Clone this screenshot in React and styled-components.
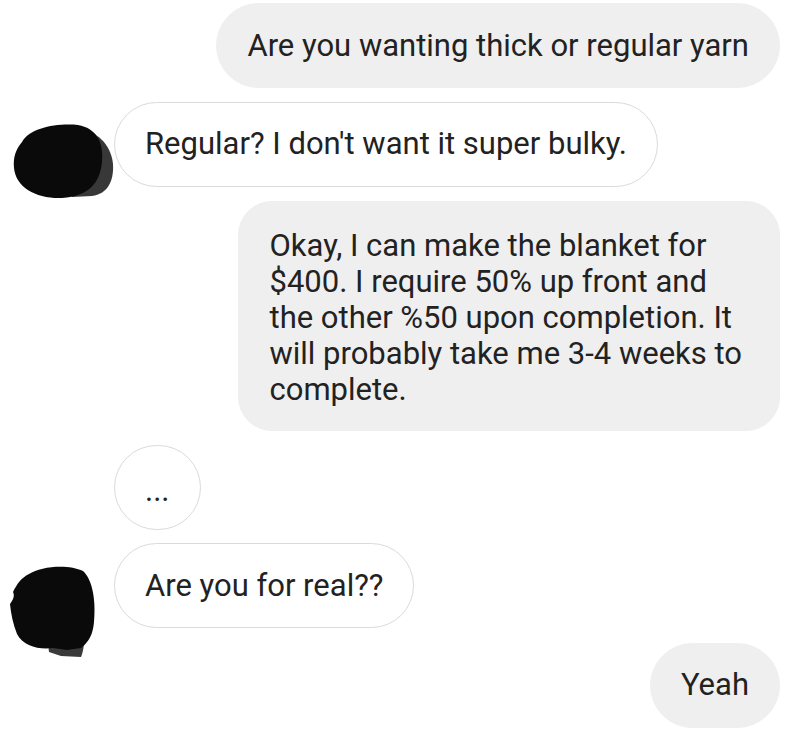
import styled, { createGlobalStyle } from 'styled-components';

const GlobalStyle = createGlobalStyle`
  html, body {
    margin: 0;
    padding: 0;
    background: #ffffff;
    overflow: hidden;
  }
  body {
    font-family: Roboto, 'Liberation Sans', Arial, sans-serif;
    color: #222222;
  }
`;

const Thread = styled.div`
  display: flex;
  flex-direction: column;
  gap: 13.5px;
  padding: 3px 20px 0 0;
  height: 727px;
  overflow: hidden;
`;

const Row = styled.div`
  display: flex;
  align-items: flex-start;
  justify-content: ${(p) => (p.$mine ? 'flex-end' : 'flex-start')};
`;

const AvatarSlot = styled.div`
  width: 114px;
  flex-shrink: 0;
  svg {
    display: block;
    margin-top: ${(p) => p.$top || 0}px;
    margin-left: ${(p) => p.$left || 0}px;
    margin-bottom: ${(p) => p.$bottom || 0}px;
  }
`;

const Bubble = styled.div`
  box-sizing: border-box;
  font-size: 31px;
  line-height: 36px;
  white-space: nowrap;
  padding: ${(p) => (p.$multi ? '25.5px 37px 22.5px 30.5px' : '23.5px 30px')};
  border-radius: ${(p) => (p.$multi ? '34px' : '43px')};
  background: ${(p) => (p.$mine ? '#efefef' : '#ffffff')};
  border: 1.5px solid ${(p) => (p.$mine ? '#efefef' : '#dadada')};
`;

const Dots = styled.span`
  display: inline-block;
  transform: translateY(4px);
`;

const BlobOne = () => (
  <svg width="105" height="78" viewBox="0 0 105 78">
    <path
      d="M68 8 C86 8 101 22 103 42 C104 60 97 72 82 74 L62 75 Z"
      fill="#383838"
    />
    <path
      d="M12 20 C20 6 46 1 68 3 C86 6 94 20 92 40 C90 60 80 74 52 76 C27 77 6 66 4 46 C3 35 6 27 12 20 Z"
      fill="#0a0a0a"
    />
  </svg>
);

const BlobTwo = () => (
  <svg width="88" height="94" viewBox="0 0 88 94">
    <path
      d="M38 72 L74 70 C76 80 74 88 72 93 L52 92 L40 88 Z"
      fill="#3a3a3a"
    />
    <path
      d="M20 10 C32 2 60 0 74 7 C84 16 87 38 85 58 C84 70 80 78 72 84 L58 86 L44 84 C30 86 14 82 8 70 C4 60 2 50 1 40 C4 36 6 32 4 28 C8 20 12 14 20 10 Z"
      fill="#0a0a0a"
    />
  </svg>
);

const App = () => {
  return (
    <>
      <GlobalStyle />
      <Thread>
        <Row $mine>
          <Bubble $mine>Are you wanting thick or regular yarn</Bubble>
        </Row>
        <Row>
          <AvatarSlot $top={20} $left={10} $bottom={-12}>
            <BlobOne />
          </AvatarSlot>
          <Bubble>Regular? I don't want it super bulky.</Bubble>
        </Row>
        <Row $mine>
          <Bubble $mine $multi>
            Okay, I can make the blanket for
            <br />
            $400. I require 50% up front and
            <br />
            the other %50 upon completion. It
            <br />
            will probably take me 3-4 weeks to
            <br />
            complete.
          </Bubble>
        </Row>
        <Row>
          <AvatarSlot />
          <Bubble>
            <Dots>...</Dots>
          </Bubble>
        </Row>
        <Row>
          <AvatarSlot $top={21} $left={9} $bottom={-29}>
            <BlobTwo />
          </AvatarSlot>
          <Bubble>Are you for real??</Bubble>
        </Row>
        <Row $mine>
          <Bubble $mine>Yeah</Bubble>
        </Row>
      </Thread>
    </>
  );
};

export default App;
